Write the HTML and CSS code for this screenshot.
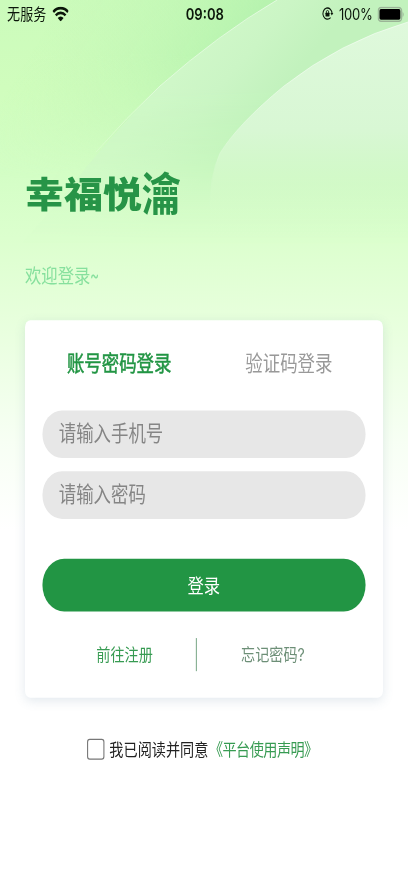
FILE: index.html
```html
<!DOCTYPE html>
<html lang="zh-CN">
<head>
<meta charset="utf-8">
<title>登录</title>
<link rel="stylesheet" href="styles.css">
</head>
<body>
<div class="screen">
  <svg class="backdrop" viewBox="0 0 408 883" preserveAspectRatio="none" aria-hidden="true">
    <defs>
      <linearGradient id="base" x1="0" y1="0" x2="0" y2="1">
        <stop offset="0" stop-color="#cbfbbb"/>
        <stop offset=".1" stop-color="#d0fdbd"/>
        <stop offset=".2" stop-color="#d4fec6"/>
        <stop offset=".27" stop-color="#dcffce"/>
        <stop offset=".36" stop-color="#e7ffdc"/>
        <stop offset=".5" stop-color="#f7fff4"/>
        <stop offset=".6" stop-color="#ffffff"/>
      </linearGradient>
      <linearGradient id="shade" gradientUnits="userSpaceOnUse" x1="70" y1="-10" x2="215" y2="80">
        <stop offset="0" stop-color="#c4f8b6" stop-opacity="0"/>
        <stop offset="1" stop-color="#b7f3af"/>
      </linearGradient>
      <linearGradient id="fade" x1="0" y1="0" x2="0" y2="1">
        <stop offset="0" stop-color="#fff"/>
        <stop offset=".3" stop-color="#fff"/>
        <stop offset="1" stop-color="#000"/>
      </linearGradient>
      <mask id="shadeMask"><rect width="408" height="180" fill="url(#fade)"/></mask>
      <linearGradient id="bandFade" x1="0" y1="0" x2="0" y2="1">
        <stop offset="0" stop-color="#fff"/>
        <stop offset=".35" stop-color="#fff"/>
        <stop offset=".65" stop-color="#999"/>
        <stop offset=".85" stop-color="#333"/>
        <stop offset="1" stop-color="#000"/>
      </linearGradient>
      <mask id="bandMask"><rect width="408" height="245" fill="url(#bandFade)"/></mask>
      <linearGradient id="band" gradientUnits="userSpaceOnUse" x1="195" y1="55" x2="262" y2="112">
        <stop offset="0" stop-color="#cff7c8"/>
        <stop offset=".45" stop-color="#cbf5c5"/>
        <stop offset="1" stop-color="#c2f2bd"/>
      </linearGradient>
      <linearGradient id="disc" gradientUnits="userSpaceOnUse" x1="0" y1="20" x2="0" y2="240">
        <stop offset="0" stop-color="#dff9dc"/>
        <stop offset=".5" stop-color="#d8f7d4"/>
        <stop offset=".75" stop-color="#d4fac9" stop-opacity=".7"/>
        <stop offset="1" stop-color="#dcffce" stop-opacity="0"/>
      </linearGradient>
      <linearGradient id="edge" gradientUnits="userSpaceOnUse" x1="0" y1="0" x2="0" y2="215">
        <stop offset="0" stop-color="#fff" stop-opacity=".5"/>
        <stop offset=".5" stop-color="#fff" stop-opacity=".4"/>
        <stop offset=".72" stop-color="#fff" stop-opacity=".15"/>
        <stop offset="1" stop-color="#fff" stop-opacity="0"/>
      </linearGradient>
    </defs>
    <rect width="408" height="883" fill="url(#base)"/>
    <rect width="408" height="180" fill="url(#shade)" mask="url(#shadeMask)"/>
    <path d="M277 0Q219 34 160 86Q115 130 60 200L20 245H408V0Z" fill="url(#band)" mask="url(#bandMask)"/>
    <path d="M277 0Q219 34 160 86Q125 119 96 152" fill="none" stroke="url(#edge)"/>
    <path d="M408 22Q340 42 284 86Q238 124 220 153Q208 180 210 240H408Z" fill="url(#disc)"/>
    <path d="M408 22Q340 42 284 86Q238 124 220 153Q209 176 210 215" fill="none" stroke="url(#edge)"/>
  </svg>

  <header class="status">
    <div class="status-left">
      <span>无服务</span>
      <svg class="wifi" viewBox="0 0 16 12" aria-hidden="true">
        <path d="M.9 4.2a10 10 0 0 1 14.2 0M3.3 6.9a6.6 6.6 0 0 1 9.4 0" fill="none" stroke="#0b160a" stroke-width="2.2"/>
        <path d="M8 11.8 5.2 8.9a3.9 3.9 0 0 1 5.6 0Z" fill="#0b160a"/>
      </svg>
    </div>
    <div class="clock">09:08</div>
    <div class="status-right">
      <svg class="lock" viewBox="0 0 12 12" aria-hidden="true">
        <path d="M9.3 9.5A4.8 4.8 0 1 1 10.8 6" fill="none" stroke="#0b160a" stroke-width="1.1"/>
        <path d="M9.1 5.5h3L10.6 7.7Z" fill="#0b160a"/>
        <rect x="3.9" y="5.4" width="4.2" height="3.2" rx=".4" fill="#0b160a"/>
        <path d="M4.8 5.6V4.5a1.2 1.2 0 0 1 2.4 0v1.1" fill="none" stroke="#0b160a" stroke-width=".8"/>
      </svg>
      <span class="percent">100%</span>
      <svg class="battery" viewBox="0 0 25 12" aria-hidden="true">
        <rect x=".6" y=".6" width="22" height="10.6" rx="2.6" fill="none" stroke="#9bb597" stroke-width="1.2"/>
        <rect x="1.8" y="1.8" width="19.6" height="8.2" rx="1.4" fill="#000"/>
        <path d="M23.6 4v3.8q1.1-.6 1.1-1.9T23.6 4Z" fill="#94ab90"/>
      </svg>
    </div>
  </header>

  <h1 class="brand"><span class="brand-wide">幸福悦</span><span class="brand-tail">瀹</span></h1>
  <p class="welcome">欢迎登录<span class="tilde">~</span></p>

  <main class="card">
    <div class="tabs">
      <span class="tab active">账号密码登录</span>
      <span class="tab">验证码登录</span>
    </div>
    <input class="field" type="tel" placeholder="请输入手机号">
    <input class="field" type="password" placeholder="请输入密码">
    <button class="submit" type="button">登录</button>
    <div class="links">
      <a class="register">前往注册</a>
      <a class="forgot">忘记密码?</a>
    </div>
  </main>

  <label class="agree">
    <input class="check" type="checkbox">
    <span>我已阅读并同意</span><a class="terms">《平台使用声明》</a>
  </label>
</div>
</body>
</html>
```
FILE: styles.css
```css
* {
  box-sizing: border-box;
}

html,
body {
  margin: 0;
  width: 408px;
  height: 883px;
  overflow: hidden;
  background: #fff;
}

/* 375x667 layout stretched to fill the 408x883 viewport */
.screen {
  position: relative;
  width: 375px;
  height: 667px;
  transform: scale(1.088, 1.3238);
  transform-origin: 0 0;
  font-family: Inter, "Noto Sans CJK SC", sans-serif;
  color: #222;
}

.backdrop {
  position: absolute;
  inset: 0;
  width: 100%;
  height: 100%;
  z-index: -1;
}

.status {
  display: grid;
  grid-template-columns: 1fr auto 1fr;
  align-items: center;
  height: 21px;
  padding: 0 4px 0 6.5px;
  font-size: 12px;
  line-height: 20px;
  color: #0b160a;
}

.status-left,
.status-right {
  display: flex;
  align-items: center;
}

.status-left {
  gap: 5px;
}

.status-right {
  justify-content: flex-end;
  gap: 4px;
}

.wifi {
  width: 15.5px;
  height: 11.5px;
}

.lock {
  width: 12px;
  height: 10.5px;
}

.percent {
  letter-spacing: -0.2px;
}

.battery {
  width: 24.5px;
  height: 12px;
}

.clock {
  font-weight: 600;
  transform: translateX(-0.5px);
}

.brand {
  display: flex;
  margin: 103px 0 0 22.5px;
  height: 42px;
  font-family: "Noto Sans CJK SC", sans-serif;
  font-size: 35.8px;
  line-height: 42px;
  font-weight: 900;
  color: #279447;
}

.brand-wide {
  transform: translateX(0.5px) scaleY(0.77);
}

.brand-tail {
  font-weight: 700;
  transform: translate(0.5px, -0.5px) scaleY(0.95);
}

.welcome {
  margin: 32px 0 0 23px;
  height: 22px;
  font-size: 15px;
  line-height: 21px;
  color: #86e09d;
}

.tilde {
  display: inline-block;
  transform: translate(-1px, -1px) scaleX(0.85);
}

.card {
  margin: 22px 23px 0;
  height: 285px;
  padding: 20px 16px 0;
  border-radius: 5px;
  background: #fff;
  box-shadow: 0 2px 9px rgba(80, 120, 150, 0.16);
}

.tabs {
  display: flex;
  gap: 68px;
  padding-left: 22.5px;
  height: 24px;
  margin-bottom: 24px;
  font-size: 16px;
  line-height: 25px;
}

.tab {
  color: #999;
}

.tab.active {
  color: #229544;
  -webkit-text-stroke: 0.4px #229544;
}

.field {
  display: block;
  width: 296.5px;
  height: 36px;
  margin: 0 0 10px;
  padding: 0 15px 1.5px;
  border: 0;
  border-radius: 18px;
  background: #e7e7e7;
  font: 16px Inter, "Noto Sans CJK SC", sans-serif;
}

.field::placeholder {
  color: #858585;
}

.submit {
  display: block;
  width: 296.5px;
  height: 40px;
  margin: 30px 0 0;
  padding: 0 0 2px;
  border: 0;
  border-radius: 20px;
  background: #229544;
  color: #fff;
  font: 15px Inter, "Noto Sans CJK SC", sans-serif;
}

.links {
  display: flex;
  margin: 20px 0 0;
  height: 25px;
  font-size: 13px;
  line-height: 25px;
}

.register {
  width: 142px;
  padding-left: 49.5px;
  border-right: 1px solid #82ad8f;
  color: #379b52;
}

.forgot {
  padding-left: 40.5px;
  color: #6d8f77;
}

.agree {
  display: flex;
  align-items: center;
  margin: 29px 0 0 79.5px;
  height: 20px;
  font-size: 13px;
  line-height: 20px;
}

.check {
  appearance: none;
  width: 16px;
  height: 16px;
  margin: 0 5px 0 0;
  border: 1px solid #777;
  border-radius: 2.5px;
  background: #fff;
}

.terms {
  margin-left: 0.5px;
  letter-spacing: -0.5px;
  color: #379b52;
}
```
